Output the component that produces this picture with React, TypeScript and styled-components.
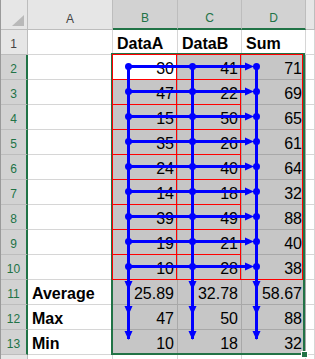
import React from "react"
import styled, { createGlobalStyle } from "styled-components"

const colors = {
  header: "#e6e6e6",
  headerSelected: "#d2d2d2",
  headerLine: "#bdbdbd",
  headerText: "#444444",
  green: "#217346",
  grid: "#d6d6d6",
  selected: "#c6c6c6",
  selectedGrid: "#a8a8a8",
  trace: "#0000ff",
  box: "#ff0000",
}

const GlobalStyle = createGlobalStyle`
  html, body {
    margin: 0;
    padding: 0;
    background: #ffffff;
  }
  body {
    font-family: "Liberation Sans", Arial, sans-serif;
    overflow: hidden;
  }
`

const Sheet = styled.div`
  position: relative;
  display: grid;
  grid-template-columns: 27px 85px 65px 64px 64px 1fr;
  grid-template-rows: 30px;
  grid-auto-rows: 25px;
  width: 315px;
  height: 359px;
  overflow: hidden;
  border-left: 1px solid #9a9a9a;
  box-sizing: border-box;
`

const Corner = styled.div`
  display: flex;
  align-items: flex-end;
  justify-content: flex-end;
  padding: 0 3px 3px 0;
  box-sizing: border-box;
  background: ${colors.header};
  border-right: 1px solid ${colors.headerLine};
  border-bottom: 1px solid ${colors.headerLine};
`

const ColHeader = styled.div`
  display: flex;
  align-items: center;
  justify-content: center;
  padding-top: 8px;
  box-sizing: border-box;
  font-size: 12px;
  color: ${p => (p.$selected ? colors.green : colors.headerText)};
  background: ${p => (p.$selected ? colors.headerSelected : colors.header)};
  border-right: 1px solid ${colors.headerLine};
  border-bottom: ${p => (p.$selected ? `2px solid ${colors.green}` : `1px solid ${colors.headerLine}`)};
`

const RowHeader = styled.div`
  display: flex;
  align-items: center;
  justify-content: center;
  padding-top: 4px;
  padding-right: ${p => (p.$selected ? "0" : "1px")};
  box-sizing: border-box;
  font-size: 12px;
  color: ${p => (p.$selected ? colors.green : colors.headerText)};
  background: ${p => (p.$selected ? colors.headerSelected : colors.header)};
  border-right: ${p => (p.$selected ? `2px solid ${colors.green}` : `1px solid ${colors.headerLine}`)};
  border-bottom: 1px solid ${colors.headerLine};
`

const Cell = styled.div`
  display: flex;
  align-items: flex-end;
  justify-content: ${p => (p.$num ? "flex-end" : "flex-start")};
  padding: 0 3px 1px 4px;
  box-sizing: border-box;
  font-size: 16px;
  font-weight: ${p => (p.$bold ? 700 : 400)};
  color: #000;
  white-space: nowrap;
  background: ${p => (p.$selected && !p.$active ? colors.selected : "#ffffff")};
  border-right: 1px solid ${p => (p.$selected ? colors.selectedGrid : colors.grid)};
  border-bottom: 1px solid ${p => (p.$selected ? colors.selectedGrid : colors.grid)};
`

const Overlay = styled.svg`
  position: absolute;
  top: 0;
  left: -1px;
  pointer-events: none;
`

const columns = ["A", "B", "C", "D", ""]

const rows = [
  { label: "", values: ["DataA", "DataB", "Sum"], bold: true },
  { label: "", values: ["30", "41", "71"] },
  { label: "", values: ["47", "22", "69"] },
  { label: "", values: ["15", "50", "65"] },
  { label: "", values: ["35", "26", "61"] },
  { label: "", values: ["24", "40", "64"] },
  { label: "", values: ["14", "18", "32"] },
  { label: "", values: ["39", "49", "88"] },
  { label: "", values: ["19", "21", "40"] },
  { label: "", values: ["10", "28", "38"] },
  { label: "Average", values: ["25.89", "32.78", "58.67"] },
  { label: "Max", values: ["47", "50", "88"] },
  { label: "Min", values: ["10", "18", "32"] },
  { label: "", values: ["", "", ""], hidden: true },
]

const rowTop = (r: number) => 30 + (r - 1) * 25
const traceX = [128.5, 192.5, 256.5]

const Traces = () => {
  const dataRows = [2, 3, 4, 5, 6, 7, 8, 9, 10]
  const resultRows = [11, 12, 13]
  const yc = (r: number) => rowTop(r) + 11.5
  return (
    <Overlay width="316" height="359" viewBox="0 0 316 359">
      {/* selection border */}
      <rect x="112" y="54" width="192" height="300" fill="none" stroke={colors.green} strokeWidth="2" shapeRendering="crispEdges" />

      {/* precedent boxes */}
      <g stroke={colors.box} strokeWidth="1" shapeRendering="crispEdges" fill="none">
        <rect x="112.5" y="54.5" width="190" height="225" />
        <line x1="176.5" y1="54" x2="176.5" y2="280" />
        <line x1="240.5" y1="54" x2="240.5" y2="280" />
        {dataRows.slice(0, -1).map(r => (
          <line key={r} x1="112" y1={rowTop(r) + 24.5} x2="241" y2={rowTop(r) + 24.5} />
        ))}
      </g>

      <g fill={colors.trace} stroke={colors.trace}>
        {traceX.map(x => (
          <line key={x} x1={x} y1={yc(2)} x2={x} y2={rowTop(13) + 9} strokeWidth="3" />
        ))}
        {dataRows.map(r => (
          <g key={r}>
            <line x1={traceX[0]} y1={yc(r)} x2={247} y2={yc(r)} strokeWidth="3" />
            <polygon points={`245,${yc(r) - 4} 254,${yc(r)} 245,${yc(r) + 4}`} stroke="none" />
            {traceX.map(x => (
              <circle key={x} cx={x} cy={yc(r)} r="3.5" stroke="none" />
            ))}
          </g>
        ))}
        {resultRows.map(r =>
          traceX.map(x => (
            <polygon
              key={`${r}-${x}`}
              points={`${x - 4},${rowTop(r) + 1} ${x + 4},${rowTop(r) + 1} ${x},${rowTop(r) + 10}`}
              stroke="none"
            />
          ))
        )}
      </g>

      {/* fill handle */}
      <rect x="301" y="351" width="6" height="6" fill={colors.green} stroke="#ffffff" strokeWidth="1" shapeRendering="crispEdges" />
    </Overlay>
  )
}

const App = () => {
  return (
    <>
      <GlobalStyle />
      <Sheet>
        <Corner>
          <svg width="12" height="11" viewBox="0 0 12 11">
            <polygon points="0,11 12,11 12,0" fill="#b9b9b9" />
          </svg>
        </Corner>
        {columns.map((c, i) => (
          <ColHeader key={i} $selected={i >= 1 && i <= 3}>{c}</ColHeader>
        ))}
        {rows.map((row, idx) => {
          const r = idx + 1
          const inRange = r >= 2 && r <= 13
          return (
            <React.Fragment key={r}>
              <RowHeader $selected={inRange}>{row.hidden ? "" : r}</RowHeader>
              <Cell $bold>{row.label}</Cell>
              {row.values.map((v, i) => (
                <Cell
                  key={i}
                  $num={!row.bold}
                  $bold={row.bold}
                  $selected={inRange}
                  $active={r === 2 && i === 0}
                >
                  {v}
                </Cell>
              ))}
              <Cell />
            </React.Fragment>
          )
        })}
        <Traces />
      </Sheet>
    </>
  )
}

export default App
